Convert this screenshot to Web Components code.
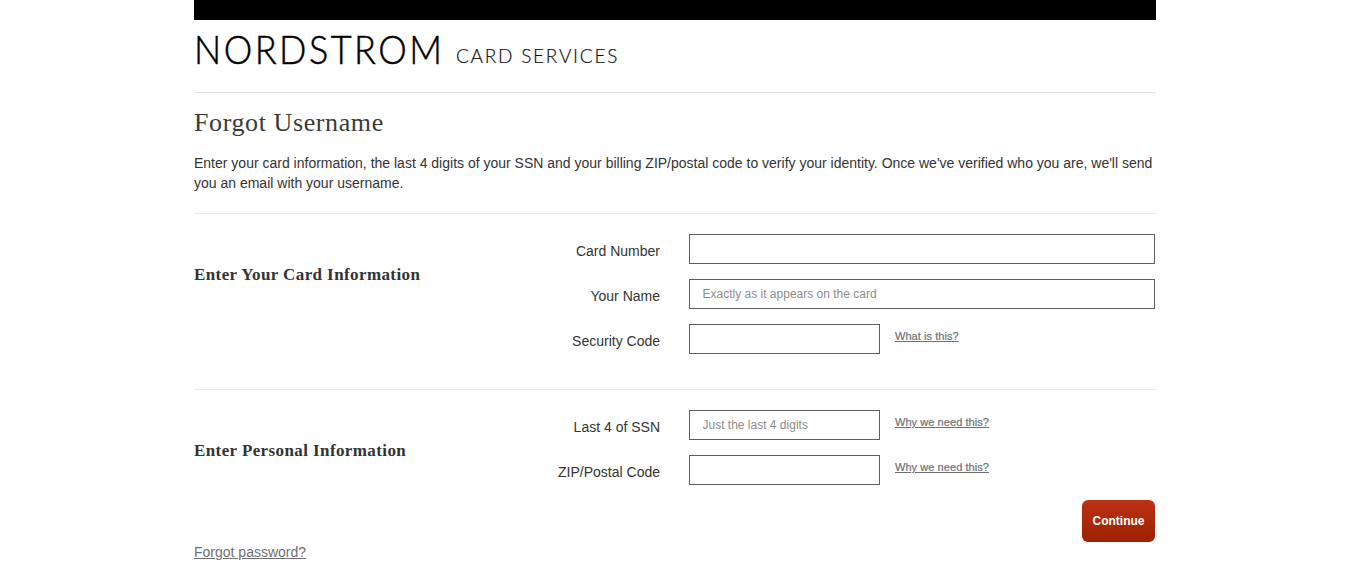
<!DOCTYPE html>
<html>
<head>
<meta charset="utf-8">
<title>Forgot Username</title>
<style>
    html, body { margin: 0; background: #fff; }
    body { font-family: "Liberation Sans", Arial, sans-serif; font-size: 14px; color: #333; }
</style>
</head>
<body>
<card-page>
    <card-header></card-header>
    <h-title>Forgot Username</h-title>
    <intro-text>Enter your card information, the last 4 digits of your SSN and your billing ZIP/postal code to verify your identity. Once we've verified who you are, we'll send you an email with your username.</intro-text>
    <form-section heading="Enter Your Card Information">
        <form-field label="Card Number"></form-field>
        <form-field label="Your Name" placeholder="Exactly as it appears on the card"></form-field>
        <form-field label="Security Code" size="small" help="What is this?"></form-field>
    </form-section>
    <form-section heading="Enter Personal Information" last>
        <form-field label="Last 4 of SSN" size="small" placeholder="Just the last 4 digits" help="Why we need this?"></form-field>
        <form-field label="ZIP/Postal Code" size="small" help="Why we need this?"></form-field>
    </form-section>
    <page-actions></page-actions>
</card-page>

<script>
class CardPage extends HTMLElement {
    constructor() {
        super();
        this.attachShadow({ mode: 'open' });
        this.shadowRoot.innerHTML = `
            <style>
                :host { display: block; width: 962px; margin-left: 194px; }
            </style>
            <slot></slot>
        `;
    }
}

class CardHeader extends HTMLElement {
    constructor() {
        super();
        this.attachShadow({ mode: 'open' });
        this.shadowRoot.innerHTML = `
            <style>
                :host { display: block; border-bottom: 1px solid #e3e3e3; height: 92px; }
                .bar { height: 20px; background: #000; }
                .logo { display: flex; align-items: flex-start; height: 72px; color: #000; }
                .brand { font-family: "Lato", sans-serif; font-weight: 300; font-size: 40px; line-height: 40px; margin-top: 9px; width: 262px; letter-spacing: 2.8px; -webkit-text-stroke: 0.5px #000; transform: scaleX(0.9); transform-origin: left top; }
                .sub { font-family: "Lato", sans-serif; font-weight: 300; font-size: 19px; line-height: 24px; margin-top: 24px; letter-spacing: 1.75px; color: #111; -webkit-text-stroke: 0.2px #111; }
            </style>
            <div class="bar"></div>
            <div class="logo"><span class="brand">NORDSTROM</span><span class="sub">CARD SERVICES</span></div>
        `;
    }
}

class HTitle extends HTMLElement {
    constructor() {
        super();
        this.attachShadow({ mode: 'open' });
        this.shadowRoot.innerHTML = `
            <style>
                :host { display: block; font-family: "Liberation Serif", serif; font-size: 26px; line-height: 30px; color: #3a3a3a; padding-top: 15px; letter-spacing: 0.6px; }
            </style>
            <slot></slot>
        `;
    }
}

class IntroText extends HTMLElement {
    constructor() {
        super();
        this.attachShadow({ mode: 'open' });
        this.shadowRoot.innerHTML = `
            <style>
                :host { display: block; font-size: 14px; line-height: 20px; color: #333; padding: 15px 0 20px; }
            </style>
            <slot></slot>
        `;
    }
}

class FormSection extends HTMLElement {
    constructor() {
        super();
        this.attachShadow({ mode: 'open' });
        this.shadowRoot.innerHTML = `
            <style>
                :host { display: grid; grid-template-columns: 1fr 466px; border-top: 1px solid #eaeaea; padding: 20px 1px 35px 0; }
                :host([last]) { padding-bottom: 0; }
                h3 { grid-column: 1; grid-row: 1; margin: 31px 0 0; font-family: "Liberation Serif", serif; font-size: 17px; line-height: 20px; font-weight: bold; color: #333; letter-spacing: 0.4px; }
                .fields { grid-column: 1 / 3; grid-row: 1; display: flex; flex-direction: column; gap: 15px; }
            </style>
            <h3></h3>
            <div class="fields"><slot></slot></div>
        `;
    }

    connectedCallback() {
        this.shadowRoot.querySelector('h3').textContent = this.getAttribute('heading');
    }
}

class FormField extends HTMLElement {
    constructor() {
        super();
        this.attachShadow({ mode: 'open' });
        this.shadowRoot.innerHTML = `
            <style>
                :host { display: flex; height: 30px; justify-content: flex-end; }
                label { font-size: 14px; line-height: 20px; padding-top: 7px; margin-right: 29px; color: #333; }
                .control { width: 466px; display: flex; }
                input { box-sizing: border-box; width: 100%; height: 30px; margin: 0; padding: 0 12.5px; border: 1px solid #5f5f5f; border-radius: 0; outline: 0; background: #fff; font-family: inherit; font-size: 12px; }
                input::placeholder { color: #8c8c8c; opacity: 1; }
                :host([size="small"]) input { width: 191px; flex: none; }
                a { margin-left: 15px; font-size: 11px; line-height: 14px; padding-top: 5px; color: #6f6f6f; text-decoration: underline; letter-spacing: 0.06px; -webkit-text-stroke: 0.2px #6f6f6f; white-space: nowrap; }
            </style>
            <label></label>
            <div class="control"><input type="text"></div>
        `;
    }

    connectedCallback() {
        const root = this.shadowRoot;
        root.querySelector('label').textContent = this.getAttribute('label');
        const input = root.querySelector('input');
        input.placeholder = this.getAttribute('placeholder') || '';
        const help = this.getAttribute('help');
        if (help) {
            const link = document.createElement('a');
            link.href = '#';
            link.textContent = help;
            root.querySelector('.control').append(link);
        }
    }
}

class PageActions extends HTMLElement {
    constructor() {
        super();
        this.attachShadow({ mode: 'open' });
        this.shadowRoot.innerHTML = `
            <style>
                :host { display: block; padding-top: 15px; }
                .row { display: flex; justify-content: flex-end; padding-right: 1px; }
                button { width: 73px; height: 42px; padding: 0; border: 0; border-radius: 6px; background: linear-gradient(#bb3215, #9c2000); color: #fff; font-family: inherit; font-size: 12px; font-weight: bold; }
                a { display: block; font-size: 14px; line-height: 20px; color: #6f6f6f; }
            </style>
            <div class="row"><button type="button">Continue</button></div>
            <a href="#">Forgot password?</a>
        `;
    }
}

customElements.define('card-page', CardPage);
customElements.define('card-header', CardHeader);
customElements.define('h-title', HTitle);
customElements.define('intro-text', IntroText);
customElements.define('form-section', FormSection);
customElements.define('form-field', FormField);
customElements.define('page-actions', PageActions);
</script>
</body>
</html>
